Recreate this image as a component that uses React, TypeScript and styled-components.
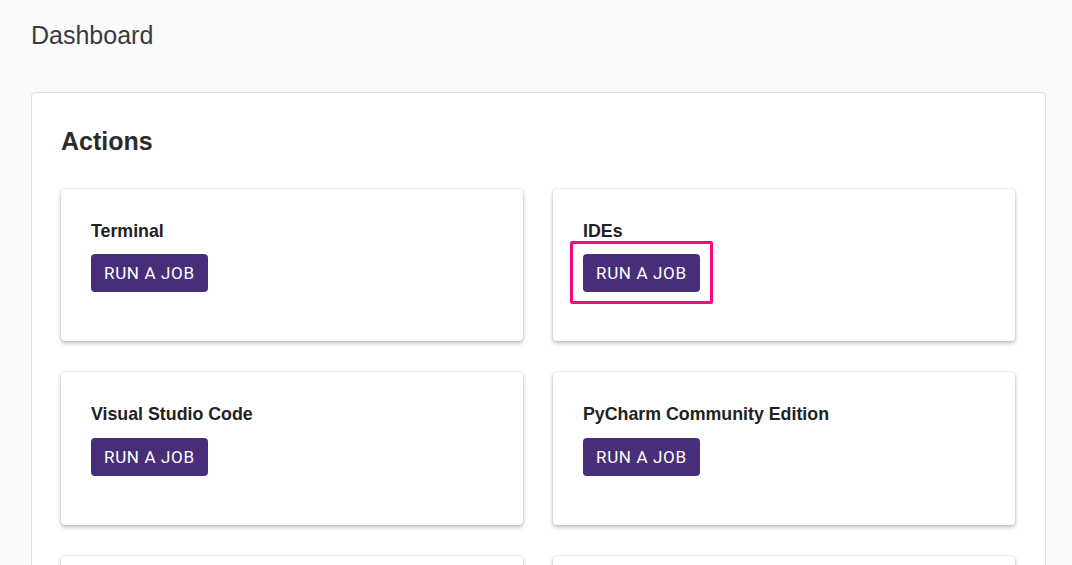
import React from "react";
import styled, { createGlobalStyle } from "styled-components";

const GlobalStyle = createGlobalStyle`
  html, body {
    margin: 0;
    padding: 0;
    background-color: #f9fafc;
    font-family: "Liberation Sans", Arial, sans-serif;
    color: #333333;
  }
`;

const Page = styled.div`
  padding: 20px 26px 40px 31px;
`;

const Title = styled.h1`
  margin: 0 0 42px;
  font-size: 25px;
  line-height: 1.2;
  font-weight: 400;
  color: #3a3a3a;
`;

const Panel = styled.section`
  background-color: #ffffff;
  border: 1px solid #e0e0e0;
  border-radius: 4px;
  padding: 33px 30px 30px 29px;
`;

const PanelHeading = styled.h2`
  margin: 0 0 33px;
  font-size: 25px;
  line-height: 1.2;
  font-weight: 700;
  color: #2b2b2b;
`;

const CardGrid = styled.div`
  display: grid;
  grid-template-columns: 1fr 1fr;
  column-gap: 30px;
  row-gap: 31px;
`;

const Card = styled.div`
  background-color: #ffffff;
  border-radius: 4px;
  box-shadow: 0 2px 4px rgba(0, 0, 0, 0.28), 0 0 2px rgba(0, 0, 0, 0.12);
  padding: 32px 30px 49px;
`;

const CardTitle = styled.h3`
  margin: 0 0 12px;
  font-size: 17.8px;
  line-height: 1.2;
  font-weight: 700;
  color: #222222;
`;

const RunButton = styled.button<{ $highlight?: boolean }>`
  position: relative;
  display: inline-block;
  background-color: #482e78;
  color: #ffffff;
  border: none;
  border-radius: 4px;
  padding: 9px 13px;
  font-family: Roboto, "Liberation Sans", Arial, sans-serif;
  font-size: 17px;
  line-height: 20px;
  letter-spacing: 0.65px;
  text-transform: uppercase;
  cursor: pointer;

  &::after {
    content: "";
    display: ${(p) => (p.$highlight ? "block" : "none")};
    position: absolute;
    inset: -13px -13px -12px -13px;
    border: 3px solid #f7087f;
    border-radius: 2px;
    pointer-events: none;
  }
`;

const actions = [
  { name: "Terminal" },
  { name: "IDEs", highlight: true },
  { name: "Visual Studio Code" },
  { name: "PyCharm Community Edition" },
  { name: "Jupyter Notebook" },
  { name: "RStudio" },
];

const App = () => {
  return (
    <>
      <GlobalStyle />
      <Page>
        <Title>Dashboard</Title>
        <Panel>
          <PanelHeading>Actions</PanelHeading>
          <CardGrid>
            {actions.map((a) => (
              <Card key={a.name}>
                <CardTitle>{a.name}</CardTitle>
                <RunButton $highlight={a.highlight}>Run a job</RunButton>
              </Card>
            ))}
          </CardGrid>
        </Panel>
      </Page>
    </>
  );
};

export default App;
